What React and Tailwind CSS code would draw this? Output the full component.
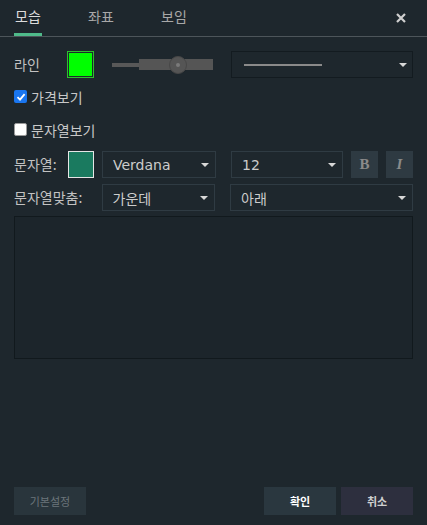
import React from "react";

function Caret() {
  return (
    <svg width="8" height="4" viewBox="0 0 8 4" className="shrink-0">
      <polygon points="0,0 8,0 4,4" fill="#d8d8d8" />
    </svg>
  );
}

function Select({ w, children, border = "border-[#2f3b43]" }) {
  return (
    <div
      className={`${w} h-[27px] border ${border} flex items-center justify-between pl-[10px] pr-[6px] text-[14px] text-[#cccccc]`}
    >
      <span className="leading-none">{children}</span>
      <Caret />
    </div>
  );
}

export default function App() {
  return (
    <div className="w-[427px] h-[525px] bg-[#1e272d] flex flex-col font-['Noto_Sans_CJK_KR',sans-serif] text-[#c2c2c2] overflow-hidden">
      {/* header */}
      <div className="h-[37px] border-b border-[#4d555a] flex items-start shrink-0">
        <div className="ml-[14px] flex gap-[45px] h-[36px]">
          <div className="h-[36px] w-[28px] border-b-[3px] border-[#4fba8a] flex items-start justify-center pt-[6px] text-[14px] leading-[20px] text-[#dcdcdc]">
            모습
          </div>
          <div className="h-[36px] w-[28px] flex items-start justify-center pt-[6px] text-[14px] leading-[20px] text-[#a8a8a8]">
            좌표
          </div>
          <div className="h-[36px] w-[28px] flex items-start justify-center pt-[6px] text-[14px] leading-[20px] text-[#a8a8a8]">
            보임
          </div>
        </div>
        <div className="ml-auto mr-[21px] mt-[13px]">
          <svg width="10" height="10" viewBox="0 0 10 10">
            <path d="M1 1 L9 9 M9 1 L1 9" stroke="#d0d0d0" strokeWidth="2.2" />
          </svg>
        </div>
      </div>

      {/* body */}
      <div className="flex flex-col px-[14px] pt-[14px] flex-1">
        {/* row line */}
        <div className="h-[27px] flex items-center">
          <div className="w-[53px] text-[14px]">라인</div>
          <div className="w-[27px] h-[27px] border border-[#2fc02f] p-[1px] bg-[#1e272d]">
            <div className="w-full h-full bg-[#00ff00]" />
          </div>
          <div className="ml-[18px] w-[101px] h-[18px] relative flex items-center">
            <div className="w-[27px] h-[4px] bg-[#585858]" />
            <div className="flex-1 h-[11px] bg-[#555555]" />
            <div className="absolute left-[57px] top-0 w-[18px] h-[18px] rounded-full bg-[#555555] border border-[#474747] flex items-center justify-center">
              <div className="w-[4px] h-[4px] rounded-full bg-[#7a7a7a]" />
            </div>
          </div>
          <div className="ml-[18px] w-[182px] h-[27px] border border-[#131b20] flex items-center justify-between pl-[12px] pr-[5px]">
            <div className="w-[78px] h-[2px] bg-[#8a8a8a]" />
            <Caret />
          </div>
        </div>

        {/* checkbox 1 */}
        <div className="mt-[10px] h-[17px] flex items-center gap-[4px]">
          <div className="w-[13px] h-[13px] rounded-[2px] bg-[#1a76f0] flex items-center justify-center">
            <svg width="10" height="10" viewBox="0 0 10 10">
              <path d="M1.5 5.2 L4 7.6 L8.6 2.2" stroke="#ffffff" strokeWidth="1.8" fill="none" />
            </svg>
          </div>
          <span className="text-[14px] leading-none text-[#c8c8c8]">가격보기</span>
        </div>

        {/* checkbox 2 */}
        <div className="mt-[16px] h-[17px] flex items-center gap-[4px]">
          <div className="w-[13px] h-[13px] rounded-[2px] bg-white border border-[#9a9a9a]" />
          <span className="text-[14px] leading-none text-[#c8c8c8]">문자열보기</span>
        </div>

        {/* text row */}
        <div className="mt-[13px] h-[27px] flex items-center">
          <div className="w-[54px] text-[14px]">문자열:</div>
          <div className="w-[26px] h-[27px] border border-[#e6e6e6] bg-[#1a7a5f]" />
          <div className="ml-[8px]">
            <Select w="w-[114px]">
              <span className="font-['DejaVu_Sans',sans-serif] text-[14px]">Verdana</span>
            </Select>
          </div>
          <div className="ml-[15px]">
            <Select w="w-[112px]">
              <span className="font-['DejaVu_Sans',sans-serif] text-[14px]">12</span>
            </Select>
          </div>
          <div className="ml-[8px] w-[27px] h-[27px] bg-[#2e3a42] flex items-center justify-center font-['Liberation_Serif',serif] font-bold text-[15px] text-[#8a8a8a]">
            B
          </div>
          <div className="ml-[8px] w-[27px] h-[27px] bg-[#2e3a42] flex items-center justify-center font-['Liberation_Serif',serif] italic font-bold text-[15px] text-[#8a8a8a]">
            I
          </div>
        </div>

        {/* align row */}
        <div className="mt-[6px] h-[27px] flex items-center">
          <div className="w-[88px] text-[14px]">문자열맞춤:</div>
          <Select w="w-[114px]">가운데</Select>
          <div className="ml-[15px]">
            <Select w="w-[183px]">아래</Select>
          </div>
        </div>

        {/* text area */}
        <div className="mt-[5px] w-[399px] h-[143px] border border-[#11191d] bg-[#1c252b]" />
      </div>

      {/* footer */}
      <div className="px-[14px] pb-[10px] flex items-center shrink-0">
        <div className="w-[72px] h-[28px] bg-[#29353c] flex items-center justify-center text-[11px] text-[#6c767b]">
          기본설정
        </div>
        <div className="ml-auto w-[72px] h-[28px] bg-[#2a373f] flex items-center justify-center text-[11px] font-bold text-white">
          확인
        </div>
        <div className="ml-[5px] w-[72px] h-[28px] bg-[#2d2f3e] flex items-center justify-center text-[11px] font-bold text-[#cfcfcf]">
          취소
        </div>
      </div>
    </div>
  );
}
